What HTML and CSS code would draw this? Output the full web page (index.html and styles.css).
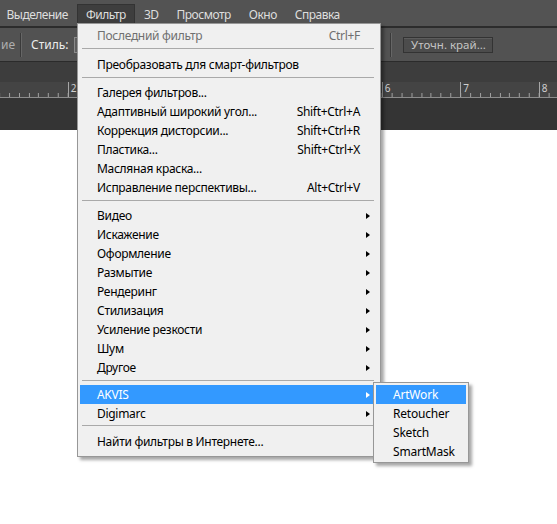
FILE: index.html
```html
<!DOCTYPE html>
<html lang="ru">
<head>
<meta charset="utf-8">
<title>Фильтр</title>
<link rel="stylesheet" href="styles.css">
</head>
<body>
<div class="app">
  <div class="menubar">
    <span class="mb-item first">Выделение</span>
    <span class="mb-item active">Фильтр</span>
    <span class="mb-item">3D</span>
    <span class="mb-item">Просмотр</span>
    <span class="mb-item">Окно</span>
    <span class="mb-item">Справка</span>
  </div>
  <div class="toolbar">
    <span class="tb-cut">ие</span>
    <span class="tb-sep"></span>
    <span class="tb-label">Стиль:</span>
    <span class="tb-select"></span>
    <span class="tb-sep right"></span>
    <span class="tb-btn">Уточн. край...</span>
  </div>
  <div class="tabband"></div>
  <div class="ruler">
    <span class="r-cell first"></span>
    <span class="r-cell">2</span>
    <span class="r-cell"></span>
    <span class="r-cell"></span>
    <span class="r-cell"></span>
    <span class="r-cell">6</span>
    <span class="r-cell">7</span>
    <span class="r-cell">8</span>
  </div>
  <div class="workarea"></div>
</div>

<div class="menu">
  <div class="mi disabled"><span class="lbl">Последний фильтр</span><span class="sc">Ctrl+F</span><span class="ar"></span></div>
  <div class="sep s1"></div>
  <div class="mi"><span class="lbl">Преобразовать для смарт-фильтров</span><span class="sc"></span><span class="ar"></span></div>
  <div class="sep"></div>
  <div class="mi"><span class="lbl">Галерея фильтров...</span><span class="sc"></span><span class="ar"></span></div>
  <div class="mi"><span class="lbl">Адаптивный широкий угол...</span><span class="sc">Shift+Ctrl+A</span><span class="ar"></span></div>
  <div class="mi"><span class="lbl">Коррекция дисторсии...</span><span class="sc">Shift+Ctrl+R</span><span class="ar"></span></div>
  <div class="mi"><span class="lbl">Пластика...</span><span class="sc">Shift+Ctrl+X</span><span class="ar"></span></div>
  <div class="mi"><span class="lbl">Масляная краска...</span><span class="sc"></span><span class="ar"></span></div>
  <div class="mi"><span class="lbl">Исправление перспективы...</span><span class="sc">Alt+Ctrl+V</span><span class="ar"></span></div>
  <div class="sep"></div>
  <div class="mi"><span class="lbl">Видео</span><span class="sc"></span><span class="ar tri"></span></div>
  <div class="mi"><span class="lbl">Искажение</span><span class="sc"></span><span class="ar tri"></span></div>
  <div class="mi"><span class="lbl">Оформление</span><span class="sc"></span><span class="ar tri"></span></div>
  <div class="mi"><span class="lbl">Размытие</span><span class="sc"></span><span class="ar tri"></span></div>
  <div class="mi"><span class="lbl">Рендеринг</span><span class="sc"></span><span class="ar tri"></span></div>
  <div class="mi"><span class="lbl">Стилизация</span><span class="sc"></span><span class="ar tri"></span></div>
  <div class="mi"><span class="lbl">Усиление резкости</span><span class="sc"></span><span class="ar tri"></span></div>
  <div class="mi"><span class="lbl">Шум</span><span class="sc"></span><span class="ar tri"></span></div>
  <div class="mi"><span class="lbl">Другое</span><span class="sc"></span><span class="ar tri"></span></div>
  <div class="sep s4"></div>
  <div class="mi hl"><span class="lbl">AKVIS</span><span class="sc"></span><span class="ar tri"></span></div>
  <div class="mi"><span class="lbl">Digimarc</span><span class="sc"></span><span class="ar tri"></span></div>
  <div class="sep s5"></div>
  <div class="mi"><span class="lbl">Найти фильтры в Интернете...</span><span class="sc"></span><span class="ar"></span></div>
</div>

<div class="submenu">
  <div class="si hl">ArtWork</div>
  <div class="si">Retoucher</div>
  <div class="si">Sketch</div>
  <div class="si">SmartMask</div>
</div>
</body>
</html>
```
FILE: styles.css
```css
html, body {
  margin: 0;
  padding: 0;
  background: #ffffff;
}
body {
  width: 557px;
  height: 524px;
  overflow: hidden;
  position: relative;
  font-family: "Noto Sans", "Open Sans", sans-serif;
  font-size: 12px;
}

/* ---------- menubar ---------- */
.menubar {
  height: 26px;
  background: #535353;
  border-bottom: 2px solid #2c2c2c;
  display: flex;
  white-space: nowrap;
}
.mb-item {
  margin-top: 4px;
  height: 22px;
  line-height: 21px;
  padding: 0 9px;
  color: #dedede;
  font-size: 12px;
  letter-spacing: -0.5px;
  box-sizing: border-box;
}
.mb-item.first {
  margin-left: -2.5px;
}
.mb-item.active {
  background: #3e3e3e;
  border: 1px solid #333;
  border-bottom: none;
  line-height: 20px;
  padding: 0 8px;
}

/* ---------- toolbar ---------- */
.toolbar {
  height: 33px;
  background: #525252;
  border-bottom: 1px solid #2b2b2b;
  display: flex;
  align-items: center;
  white-space: nowrap;
}
.tb-cut {
  margin-left: 1px;
  color: #aeaeae;
  font-size: 12px;
}
.tb-sep {
  width: 1px;
  height: 24px;
  background: #3a3a3a;
  border-right: 1px solid #666;
  margin-left: 5px;
}
.tb-label {
  margin-left: 9px;
  color: #ececec;
  font-size: 12px;
}
.tb-select {
  margin-left: 6px;
  width: 40px;
  height: 16px;
  box-sizing: border-box;
  border: 1px solid #8a8a8a;
  background: #5e5e5e;
}
.tb-sep.right {
  margin-left: 276px;
}
.tb-btn {
  margin-left: 11px;
  width: 90px;
  height: 16px;
  box-sizing: border-box;
  border: 1px solid #333;
  background: #4c4c4c;
  box-shadow: inset 0 1px 0 #5c5c5c;
  color: #c4c4c4;
  font-size: 11.5px;
  line-height: 14px;
  text-align: center;
}

/* ---------- tab band / ruler ---------- */
.tabband {
  height: 20px;
  background: #3d3d3d;
}
.ruler {
  height: 15px;
  background-color: #444444;
  border-bottom: 1px solid #8c8c8c;
  display: flex;
  overflow: hidden;
  background-image: repeating-linear-gradient(90deg, #a0a0a0 0 1px, transparent 1px 9.8125px);
  background-size: 78.5px 4px;
  background-repeat: repeat-x;
  background-position: 67.7px 100%;
}
.r-cell {
  flex: 0 0 78.5px;
  box-sizing: border-box;
  border-left: 1px solid #a6a6a6;
  padding-left: 2px;
  color: #cfcfcf;
  font-size: 10px;
  line-height: 12px;
}
.r-cell.first {
  margin-left: -10.8px;
}
.workarea {
  height: 32px;
  background: #343434;
}

/* ---------- dropdown menu ---------- */
.menu {
  position: absolute;
  left: 77px;
  top: 23px;
  width: 304px;
  box-sizing: border-box;
  background: #f0f0f0;
  border: 1px solid #979797;
  padding: 2px 2px 5px 2px;
  box-shadow: 3px 3px 3px rgba(0, 0, 0, 0.35);
  color: #000;
  letter-spacing: -0.3px;
}
.mi {
  height: 19px;
  display: grid;
  grid-template-columns: 1fr auto 18px;
  align-items: center;
  padding-left: 17px;
  white-space: nowrap;
}
.mi.disabled {
  color: #6f6f6f;
}
.mi.hl {
  background: #3399ff;
  color: #ffffff;
}
.sc {
  text-align: right;
}
.ar.tri {
  width: 0;
  height: 0;
  margin-left: 6px;
  border-top: 3.5px solid transparent;
  border-bottom: 3.5px solid transparent;
  border-left: 4px solid #000;
}
.mi.hl .ar.tri {
  border-left-color: #ffffff;
}
.sep {
  height: 1px;
  background: #a9a9a9;
  margin: 3px 4px 5px 2px;
}
.sep.s1 {
  margin-bottom: 6px;
}
.sep.s4 {
  margin-bottom: 4px;
}
.sep.s5 {
  margin-top: 2px;
  margin-bottom: 6px;
}

/* ---------- submenu ---------- */
.submenu {
  position: absolute;
  left: 373px;
  top: 382px;
  width: 96px;
  box-sizing: border-box;
  background: #f0f0f0;
  border: 1px solid #979797;
  padding: 2px 2px 1px 2px;
  box-shadow: 3px 3px 3px rgba(0, 0, 0, 0.35);
  letter-spacing: -0.2px;
}
.si {
  height: 19px;
  line-height: 19px;
  padding-left: 17px;
  color: #000;
  white-space: nowrap;
}
.si.hl {
  background: #3399ff;
  color: #fff;
}
```
